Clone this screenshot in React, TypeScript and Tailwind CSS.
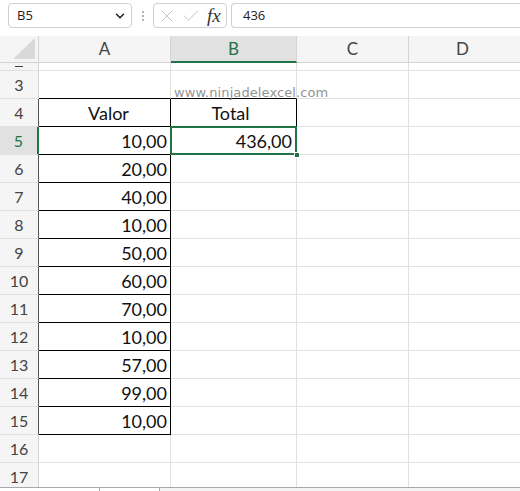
import { ChevronDown, X, Check } from 'lucide-react';

const values = ['10,00', '20,00', '40,00', '10,00', '50,00', '60,00', '70,00', '10,00', '57,00', '99,00', '10,00'];

const GRID = 'border-[#e1e1e1]';

function RowHeader({ n, h, active, dark }: { n: string; h: string; active?: boolean; dark?: boolean }) {
  return (
    <div
      className={`${h} flex items-center justify-center border-b border-b-[#e1e1e1] overflow-hidden text-[16px] pt-[1px] ${
        active
          ? 'bg-[#e1e1e1] text-[#217346] border-r-2 border-r-[#217346]'
          : `bg-[#f5f5f5] text-[#444] border-r ${dark ? 'border-r-[#555]' : 'border-r-[#d4d4d4]'}`
      }`}
      style={{ fontFamily: 'Lato, "Open Sans", sans-serif' }}
    >
      {n}
    </div>
  );
}

export default function App() {
  const rows: { n: string; h: string }[] = [];
  for (let i = 3; i <= 16; i++) rows.push({ n: String(i), h: 'h-[28px]' });

  return (
    <div className="w-[520px] h-[491px] bg-white overflow-hidden flex flex-col" style={{ fontFamily: 'Lato, "Open Sans", sans-serif' }}>
      {/* Formula bar */}
      <div className="h-[36px] flex items-start pt-[3px] pl-[8px] gap-0 shrink-0">
        <div className="w-[124px] h-[25px] border border-[#d0d0d0] rounded-[4px] flex items-center pl-[8px] pr-[4px] bg-white">
          <span className="text-[13px] text-[#222] flex-1" style={{ fontFamily: '"Open Sans", sans-serif' }}>B5</span>
          <ChevronDown size={14} strokeWidth={2.6} className="text-[#222]" />
        </div>
        <div className="w-[21px] h-[25px] flex flex-col items-center justify-center gap-[2px]">
          <span className="w-[2px] h-[2px] bg-[#999] rounded-full" />
          <span className="w-[2px] h-[2px] bg-[#999] rounded-full" />
          <span className="w-[2px] h-[2px] bg-[#999] rounded-full" />
        </div>
        <div className="w-[74px] h-[25px] border border-[#d0d0d0] rounded-[4px] flex items-center pl-[3px] gap-[4px]">
          <X size={20} strokeWidth={1} className="text-[#b5b5b5]" />
          <Check size={20} strokeWidth={1} className="text-[#b5b5b5]" />
          <span className="text-[19px] italic text-[#333] leading-none ml-[2px]" style={{ fontFamily: '"Liberation Serif", serif' }}>fx</span>
        </div>
        <div className="flex-1 ml-[4px] h-[25px] border border-[#d0d0d0] border-r-0 rounded-l-[4px] flex items-center pl-[11px]">
          <span className="text-[13px] text-[#222]" style={{ fontFamily: '"Open Sans", sans-serif' }}>436</span>
        </div>
      </div>

      {/* Grid */}
      <div className="grid grid-cols-[39px_132px_126px_112px_1fr] flex-1 overflow-hidden content-start">
        {/* Header row */}
        <div className="h-[27px] bg-[#f5f5f5] border-r border-b border-[#d4d4d4] flex items-end justify-end pr-[3px] pb-[3px]">
          <svg width="22" height="21" viewBox="0 0 22 21">
            <polygon points="22,0 22,21 0,21" fill="#d9d9d9" />
          </svg>
        </div>
        <div className="h-[27px] bg-[#f5f5f5] border-r border-b border-[#d4d4d4] flex items-center justify-center text-[17px] text-[#444]">A</div>
        <div className="h-[27px] bg-[#e1e1e1] border-r border-r-[#d4d4d4] border-b-2 border-b-[#217346] flex items-center justify-center text-[17px] text-[#217346] pt-[1px]">B</div>
        <div className="h-[27px] bg-[#f5f5f5] border-r border-b border-[#d4d4d4] flex items-center justify-center text-[17px] text-[#444]">C</div>
        <div className="h-[27px] bg-[#f5f5f5] border-b border-[#d4d4d4] flex items-center justify-center text-[17px] text-[#444] pr-[4px]">D</div>

        {/* Row 2 (partial) */}
        <div className="h-[8px] bg-[#f5f5f5] border-r border-r-[#d4d4d4] border-b border-b-[#e1e1e1] flex items-end justify-center overflow-hidden">
          <span className="block w-[8px] h-[1px] bg-[#444] mb-[3px]" />
        </div>
        <div className={`h-[8px] border-r border-b ${GRID}`} />
        <div className={`h-[8px] border-r border-b ${GRID}`} />
        <div className={`h-[8px] border-r border-b ${GRID}`} />
        <div className={`h-[8px] border-b ${GRID}`} />

        {rows.map((r) => {
          const i = Number(r.n);
          const inTable = i >= 4 && i <= 15;
          const aBottomBlack = i >= 3 && i <= 15;
          const bBottomBlack = i === 3 || i === 4;
          const aRightBlack = inTable;
          const bRightBlack = i === 4;
          return [
            <RowHeader key={`h${i}`} n={r.n} h={r.h} active={i === 5} dark={inTable} />,
            <div
              key={`a${i}`}
              className={`${r.h} border-r border-b flex items-center pt-[2px] text-[18px] text-[#111] ${
                aBottomBlack ? 'border-b-black' : 'border-b-[#e1e1e1]'
              } ${aRightBlack ? 'border-r-black' : 'border-r-[#e1e1e1]'} ${
                i === 4 ? 'justify-center pl-[8px]' : 'justify-end pr-[3px]'
              }`}
            >
              {i === 4 ? 'Valor' : inTable ? values[i - 5] : ''}
            </div>,
            <div
              key={`b${i}`}
              className={`${r.h} relative border-r border-b flex items-center pt-[2px] text-[18px] text-[#111] ${
                bBottomBlack ? 'border-b-black' : 'border-b-[#e1e1e1]'
              } ${bRightBlack ? 'border-r-black' : 'border-r-[#e1e1e1]'} ${
                i === 4 ? 'justify-center pr-[6px]' : 'justify-end pr-[4px]'
              }`}
            >
              {i === 3 && (
                <span className="absolute left-[3px] -bottom-[4px] z-10 whitespace-nowrap text-[13px] text-[#939393] tracking-[0.1px]" style={{ fontFamily: '"DejaVu Sans", sans-serif' }}>
                  www.ninjadelexcel.com
                </span>
              )}
              {i === 4 && 'Total'}
              {i === 5 && (
                <>
                  <span className="relative z-10">436,00</span>
                  <span className="absolute -left-[1px] -top-[1px] -right-[1px] -bottom-[1px] border-2 border-[#217346]" />
                  <span className="absolute -right-[4px] -bottom-[4px] w-[6px] h-[6px] bg-[#217346] border border-white z-20" />
                </>
              )}
            </div>,
            <div key={`c${i}`} className={`${r.h} border-r border-b ${GRID}`} />,
            <div key={`d${i}`} className={`${r.h} border-b ${GRID}`} />,
          ];
        })}

        {/* Row 17 (partial) */}
        <div className="h-[24px] bg-[#f5f5f5] border-r border-[#d4d4d4] flex items-center justify-center text-[16px] text-[#444] overflow-hidden pt-[4px]">17</div>
        <div className={`h-[24px] border-r ${GRID}`} />
        <div className={`h-[24px] border-r ${GRID}`} />
        <div className={`h-[24px] border-r ${GRID}`} />
        <div className="h-[24px]" />
      </div>

      {/* Sheet tabs strip */}
      <div className="h-[4px] shrink-0 bg-[#f3f3f3] border-t border-[#a8a8a8] flex">
        <div className="w-[100px] bg-white border-r border-[#a8a8a8]" />
        <div className="w-[59px] bg-white" />
        <div className="flex-1 bg-[#f3f3f3] border-l border-[#a8a8a8]" />
      </div>
    </div>
  );
}
